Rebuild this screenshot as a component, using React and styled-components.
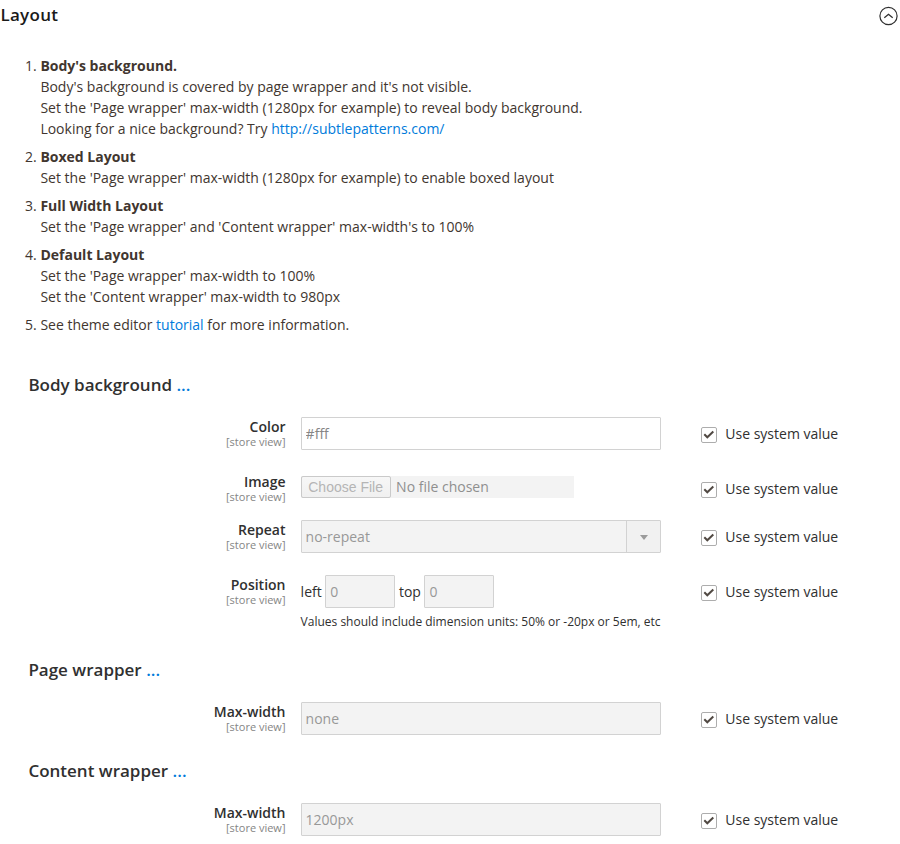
import React from "react";
import styled, { createGlobalStyle } from "styled-components";

const GlobalStyle = createGlobalStyle`
  *, *::before, *::after { box-sizing: border-box; }
  body {
    margin: 0;
    background: #fff;
    color: #303030;
    font: 400 14px/21px "Open Sans", sans-serif;
  }
`;

const Page = styled.main`
  width: 900px;
  height: 844px;
  overflow: hidden;
`;

const Header = styled.header`
  display: flex;
  justify-content: space-between;
  height: 55px;
  padding: 4px 2px 0 0.4px;
`;

const Title = styled.h1`
  margin: 0;
  font-size: 17px;
  font-weight: 600;
  letter-spacing: 0.3px;
  line-height: 22px;
  color: #1a1a1a;
`;

const Toggle = styled.svg`
  width: 20px;
  height: 20px;
  margin-top: 2px;
  fill: none;
  stroke: #303030;
`;

const Link = styled.a`
  color: #007bdb;
  text-decoration: none;
`;

const Notes = styled.ol`
  display: flex;
  flex-direction: column;
  gap: 7px;
  height: 315px;
  margin: 0;
  padding: 0 0 0 40.4px;
  color: #41362f;
`;

const Note = styled.li`
  strong { font-weight: 700; }
`;

const Section = styled.section`
  height: ${({ $height }) => $height}px;
`;

const Heading = styled.h2`
  height: 47px;
  margin: 0;
  padding: 4px 0 0 28.4px;
  font-size: 17px;
  font-weight: 600;
  line-height: 22px;
`;

const Row = styled.div`
  display: grid;
  grid-template-columns: 285.5px 360.5px 1fr;
  height: ${({ $height = 33 }) => $height}px;
  margin-bottom: 22px;
`;

const Label = styled.div`
  padding-top: 1px;
  text-align: right;
  font-weight: 600;
  line-height: 18px;
  height: 33px;
`;

const Scope = styled.span`
  display: block;
  color: #858585;
  font-size: 11px;
  font-weight: 400;
  line-height: 11px;
`;

const Control = styled.div`
  margin-left: 15.1px;
  width: 360px;
`;

const Input = styled.input`
  display: block;
  width: ${({ $small }) => ($small ? "70px" : "100%")};
  height: 33px;
  margin: 0;
  padding: 0 4px;
  border: 1px solid #d2d2d2;
  border-radius: 1px;
  background: ${({ $plain }) => ($plain ? "#fff" : "#f3f3f3")};
  color: ${({ $plain }) => ($plain ? "#858585" : "#989898")};
  font: inherit;
`;

const Select = styled.div`
  display: flex;
  height: 33px;
  border: 1px solid #d2d2d2;
  border-radius: 1px;
  background: #f3f3f3;
  color: #989898;
  line-height: 31px;
  padding-left: 4px;
`;

const SelectValue = styled.span`
  flex: 1;
`;

const Arrow = styled.span`
  display: flex;
  align-items: center;
  justify-content: center;
  width: 34px;
  border-left: 1px solid #d2d2d2;
  background: #f1f1f1;

  &::after {
    content: "";
    border: 4px solid transparent;
    border-top: 5px solid #9b9b9b;
    border-bottom: 0;
    margin: 2px 0 0 1px;
  }
`;

const FilePicker = styled.div`
  display: flex;
  width: 273px;
  height: 22px;
  margin-top: 4px;
  background: #f3f3f3;
  color: #8f8f8f;
  line-height: 22px;
`;

const FileButton = styled.button`
  width: 90px;
  height: 22px;
  margin-right: 5.5px;
  padding: 0;
  border: 1px solid #cacaca;
  border-radius: 2px;
  background: linear-gradient(#f7f7f7, #f0f0f0);
  color: #b5b5b5;
  font: 14px/20px "Liberation Sans", sans-serif;
  white-space: nowrap;
`;

const Pair = styled.div`
  display: flex;
  align-items: center;
  gap: 3.6px;
`;

const Hint = styled.p`
  margin: 5px 0 0;
  font-size: 12px;
  line-height: 17px;
  white-space: nowrap;
`;

const System = styled.label`
  display: flex;
  height: 33px;
  margin-left: 55px;
  align-items: center;
  gap: 8.3px;
  white-space: nowrap;
`;

const Checkbox = styled.svg`
  width: 16px;
  height: 16px;
  margin-top: 3px;
  fill: none;
`;

function Field({ label, height, children }) {
  return (
    <Row $height={height}>
      <Label>{label}<Scope>[store view]</Scope></Label>
      <Control>{children}</Control>
      <System>
        <Checkbox viewBox="0 0 16 16">
          <rect x=".5" y=".5" width="15" height="15" rx="1.5" fill="#fff" stroke="#adadad" />
          <path d="M3.3 7.3 6.3 10.3 12.3 4.5" stroke="#514943" strokeWidth="2" />
        </Checkbox>
        <span>Use system value</span>
      </System>
    </Row>
  );
}

export default function App() {
  return (
    <>
      <GlobalStyle />
      <Page>
        <Header>
          <Title>Layout</Title>
          <Toggle viewBox="0 0 20 20">
            <circle cx="10.5" cy="10" r="8.6" strokeWidth="1.2" />
            <path d="M6.3 11.8 10.5 8.3l4.2 3.5" strokeWidth="1.3" />
          </Toggle>
        </Header>
        <Notes>
          <Note>
            <strong>Body's background.</strong><br />
            Body's background is covered by page wrapper and it's not visible.<br />
            Set the 'Page wrapper' max-width (1280px for example) to reveal body background.<br />
            Looking for a nice background? Try <Link href="#">http://subtlepatterns.com/</Link>
          </Note>
          <Note>
            <strong>Boxed Layout</strong><br />
            Set the 'Page wrapper' max-width (1280px for example) to enable boxed layout
          </Note>
          <Note>
            <strong>Full Width Layout</strong><br />
            Set the 'Page wrapper' and 'Content wrapper' max-width's to 100%
          </Note>
          <Note>
            <strong>Default Layout</strong><br />
            Set the 'Page wrapper' max-width to 100%<br />
            Set the 'Content wrapper' max-width to 980px
          </Note>
          <Note>
            See theme editor <Link href="#">tutorial</Link> for more information.
          </Note>
        </Notes>
        <Section $height={285}>
          <Heading>Body background <Link href="#">...</Link></Heading>
          <Field label="Color"><Input $plain readOnly value="#fff" /></Field>
          <Field label="Image" height={26}>
            <FilePicker><FileButton disabled>Choose File</FileButton>No file chosen</FilePicker>
          </Field>
          <Field label="Repeat">
            <Select><SelectValue>no-repeat</SelectValue><Arrow /></Select>
          </Field>
          <Field label="Position">
            <Pair>
              <span>left</span><Input $small disabled value="0" />
              <span>top</span><Input $small disabled value="0" />
            </Pair>
            <Hint>Values should include dimension units: 50% or -20px or 5em, etc</Hint>
          </Field>
        </Section>
        <Section $height={101}>
          <Heading>Page wrapper <Link href="#">...</Link></Heading>
          <Field label="Max-width"><Input disabled value="none" /></Field>
        </Section>
        <Section $height={88}>
          <Heading>Content wrapper <Link href="#">...</Link></Heading>
          <Field label="Max-width"><Input disabled value="1200px" /></Field>
        </Section>
      </Page>
    </>
  );
}
